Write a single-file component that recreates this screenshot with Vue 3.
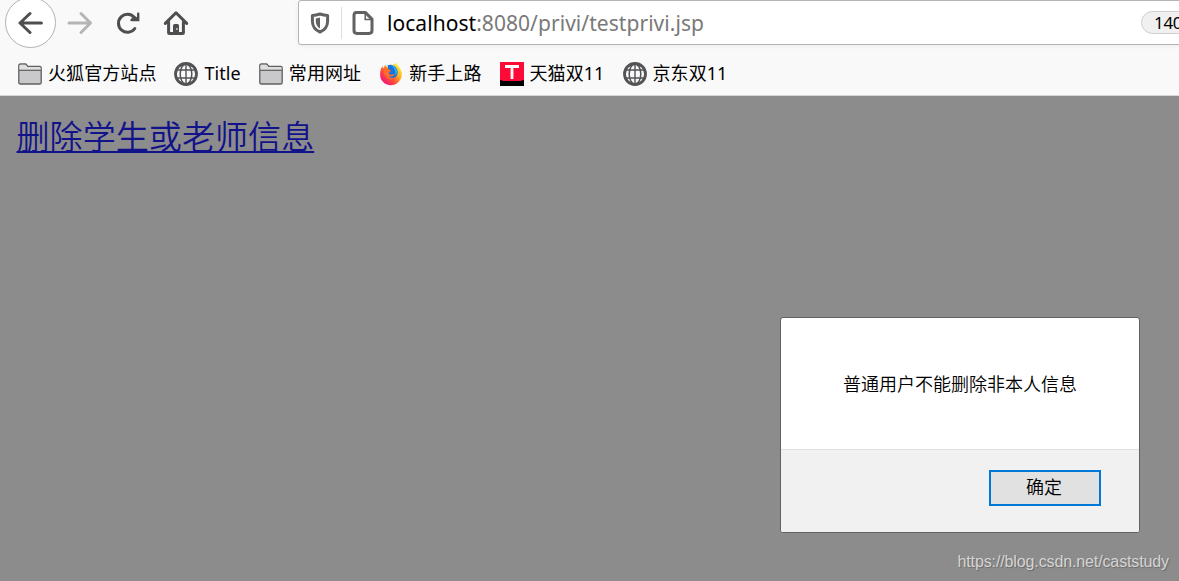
<script setup>
import { ref } from 'vue'

const bookmarks = [
  { icon: 'folder', title: '火狐官方站点' },
  { icon: 'globe', title: 'Title' },
  { icon: 'folder', title: '常用网址' },
  { icon: 'firefox', title: '新手上路' },
  { icon: 'tmall', title: '天猫双11' },
  { icon: 'globe', title: '京东双11' },
]

const dialogOpen = ref(true)
</script>

<template>
  <div class="browser">
    <header class="chrome">
      <div class="toolbar">
        <nav class="nav">
          <button class="nav__back" aria-label="Back">
            <svg width="26" height="24" viewBox="0 0 26 24">
              <path d="M23.4 12H3M12 2.5L2 12L12 21.5" />
            </svg>
          </button>
          <button class="nav__btn nav__btn--disabled" aria-label="Forward">
            <svg width="26" height="24" viewBox="0 0 26 24">
              <path d="M2 12H23M14 2.5L23.5 12L14 21.5" />
            </svg>
          </button>
          <button class="nav__btn nav__btn--reload" aria-label="Reload">
            <svg width="26" height="24" viewBox="0 0 26 24">
              <path d="M19.8 17.5A9 9 0 1 1 19.4 6.5L22 8.5" />
              <path class="solid" d="M23.2 1.5c.9 0 1.2.4 1.2 1.3v7.4h-7.8c-1.3 0-1.7-1.1-.9-2l2.2-2.2 2.4 1.6 1.7-1.6V2.8c0-.9.4-1.3 1.2-1.3z" />
            </svg>
          </button>
          <button class="nav__btn nav__btn--home" aria-label="Home">
            <svg width="26" height="26" viewBox="0 0 26 26">
              <path d="M2.3 13.4L13 2.8L23.7 13.4M5.6 12V22.5Q5.6 23.5 6.6 23.5H19.4Q20.4 23.5 20.4 22.5V12" />
              <path class="solid" d="M10 24V15.5q0-1.5 1.5-1.5h3q1.5 0 1.5 1.5V24z" />
              <rect class="knob" x="13.2" y="18" width="1.5" height="2" />
            </svg>
          </button>
        </nav>

        <div class="urlbar">
          <svg class="urlbar__shield" width="20" height="22" viewBox="0 0 20 22">
            <path class="line" d="M10 2C7.4 2.9 5 3.4 2.4 3.6V9.5C2.6 14.8 5.4 18.2 10 20C14.6 18.2 17.4 14.8 17.6 9.5V3.6C15 3.4 12.6 2.9 10 2Z" />
            <path class="fill" d="M10 5.5V16.5C7.2 15 6 12.6 5.8 9.5V6.5C7.3 6.3 8.6 6 10 5.5Z" />
          </svg>
          <span class="urlbar__divider"></span>
          <svg class="urlbar__page" width="22" height="24" viewBox="0 0 22 24">
            <path class="line" d="M4.5 1.6H13.5L20 8.1V19.5Q20 22.4 17.1 22.4H4.9Q2 22.4 2 19.5V4.5Q2 1.6 4.5 1.6Z" />
            <path class="thin" d="M13.2 2V8.5H19.7" />
          </svg>
          <span class="urlbar__text"><b>localhost</b>:8080/privi/testprivi.jsp</span>
          <span class="urlbar__zoom">140%</span>
        </div>
      </div>

      <div class="bookmarks">
        <a v-for="(item, i) in bookmarks" :key="i" class="bookmark">
          <svg v-if="item.icon === 'folder'" width="24" height="24" viewBox="0 0 24 24">
            <path
              d="M.8 20.4V3.6Q.8 2 2.4 2H7.2Q8.2 2 8.7 2.8L9.8 4.4H21.6Q23.2 4.4 23.2 6V20.4Q23.2 22 21.6 22H2.4Q.8 22 .8 20.4Z"
              fill="#c9c9cb" stroke="#606060" stroke-width="1.3"
            />
            <path d="M1.5 8V3.8Q1.5 2.7 2.6 2.7H7.3L9.2 5.1H21.4Q22.5 5.1 22.5 6V8Z" fill="#dedede" />
            <path d="M1 8.3H23" stroke="#606060" stroke-width="1.2" />
          </svg>
          <svg v-else-if="item.icon === 'globe'" width="24" height="24" viewBox="0 0 24 24">
            <g fill="none" stroke="#535355">
              <circle cx="12" cy="12" r="10.5" stroke-width="2.8" />
              <ellipse cx="12" cy="12" rx="5.8" ry="10" stroke-width="1.5" />
              <path d="M12 2V22M3 8H21M3 16H21" stroke-width="1.4" />
            </g>
          </svg>
          <svg v-else-if="item.icon === 'firefox'" width="24" height="24" viewBox="0 0 24 24">
            <defs>
              <linearGradient id="fox" x1=".9" y1=".1" x2=".15" y2=".9">
                <stop offset="0" stop-color="#fff23a" />
                <stop offset=".35" stop-color="#ffb01f" />
                <stop offset=".65" stop-color="#ff4f35" />
                <stop offset="1" stop-color="#f5107c" />
              </linearGradient>
            </defs>
            <path
              d="M3.3 4.2C3.5 5.2 4 5.8 4.5 6.2C5 4.8 5.6 3.8 6.8 2.7C7 4 7.8 5 9 5.5L17 1C17.4 2.6 18.6 3.3 19.8 4.8C22.1 7.3 23 10 22.8 13C22.3 19 17.5 23.2 12 23.2C5.8 23.2 1.1 18.5 1.1 12.5C1.1 9.3 1.8 6.5 3.3 4.2Z"
              fill="url(#fox)"
            />
            <path d="M8.5 3.2C12.5 1.5 17 4.1 18.4 8.2C19.4 12.4 17.2 16.8 12.5 16.8C9 16.8 6.5 14.4 6.3 11.5L9.5 8.5Z" fill="#1674df" />
            <path d="M12 3C14.5 3.4 17 5.3 17.8 8.2C18.2 10.4 17.5 12.5 16.4 14C16.8 9 15.4 5.5 12 3Z" fill="#29b3f5" />
            <path d="M4.5 6.2C6 5.7 7.8 5.8 9 6.4C9.8 7.7 11 8 12.2 8.3C12.3 9.6 10.2 9.8 10 10.6C9.7 12 10.8 13.3 13.2 12.4C14.5 12 15.4 12.2 15.8 12.8C14 14.1 12.6 15.2 9.6 14.2C11 16.2 14.5 16.5 17.3 14.3C14.5 19.7 4.3 18.7 4.5 6.2Z" fill="#ff6b2c" />
          </svg>
          <svg v-else width="24" height="24" viewBox="0 0 24 24">
            <rect width="24" height="24" fill="#ff0a37" />
            <path d="M0 18Q2.2 18 3 19H21Q21.8 18 24 18V24H0Z" fill="#000" />
            <path d="M5 4.5H19M12 4.5V17" fill="none" stroke="#fff" stroke-width="2.8" />
          </svg>
          <span class="bookmark__title">{{ item.title }}</span>
        </a>
      </div>
    </header>

    <main class="page">
      <a class="page__link">删除学生或老师信息</a>
    </main>

    <div v-if="dialogOpen" class="dialog" role="alertdialog">
      <p class="dialog__message">普通用户不能删除非本人信息</p>
      <div class="dialog__footer">
        <button class="dialog__ok" @click="dialogOpen = false">确定</button>
      </div>
    </div>

    <span class="watermark">https://blog.csdn.net/caststudy</span>
  </div>
</template>

<style>
body {
  margin: 0;
  overflow: hidden;
}
</style>

<style scoped>
.browser {
  position: relative;
  width: 1179px;
  height: 581px;
  display: flex;
  flex-direction: column;
  overflow: hidden;
  background: #8c8c8c;
  font-family: "Noto Sans", "Noto Sans CJK SC", sans-serif;
  color: #000;
}

button {
  padding: 0;
  border: 0;
  background: none;
  font-family: inherit;
}

svg {
  display: block;
  flex: none;
}

.chrome {
  box-sizing: border-box;
  height: 96px;
  flex: none;
  background: #f9f9fa;
  border-bottom: 1px solid #d6d6d6;
}

.toolbar {
  display: flex;
  height: 52px;
}

.nav {
  display: flex;
  flex: none;
  align-items: flex-start;
  width: 293px;
  padding-left: 5px;
}

.nav svg {
  fill: none;
  stroke: #4e4e50;
  stroke-width: 3;
  stroke-linecap: round;
  stroke-linejoin: round;
}

.nav .solid {
  fill: #4e4e50;
  stroke: none;
}

.nav .knob {
  fill: #c8c8c8;
  stroke: none;
}

.nav__back {
  box-sizing: border-box;
  display: flex;
  align-items: center;
  justify-content: center;
  width: 51px;
  height: 51px;
  margin-top: -3px;
  border: 1px solid #b2b2b3;
  border-radius: 50%;
  background: #fff;
}

.nav__btn {
  margin: 11px 0 0 11px;
}

.nav .nav__btn--disabled svg {
  stroke: #b5b5b6;
}

.nav__btn--reload {
  margin-left: 22px;
}

.nav__btn--home {
  margin: 10px 0 0 22px;
}

.urlbar {
  box-sizing: border-box;
  display: flex;
  align-items: center;
  flex: none;
  width: 912px;
  height: 45px;
  padding-left: 11px;
  border: 1px solid #b4b4b5;
  border-radius: 3px;
  background: #fff;
  box-shadow: 0 1px 5px rgb(0 0 0 / 0.06);
}

.urlbar .line {
  fill: none;
  stroke: #626264;
  stroke-width: 3;
  stroke-linejoin: round;
}

.urlbar .fill {
  fill: #626264;
}

.urlbar .thin {
  fill: none;
  stroke: #626264;
  stroke-width: 1.5;
}

.urlbar__divider {
  width: 1px;
  height: 32px;
  margin: 0 10px 0 11px;
  background: #dedede;
}

.urlbar__text {
  flex: none;
  width: 754px;
  margin-left: 13px;
  font-size: 21px;
  line-height: 30px;
  letter-spacing: 0.05px;
  white-space: nowrap;
  color: #797979;
}

.urlbar__text b {
  font-weight: 400;
  color: #000;
}

.urlbar__zoom {
  box-sizing: border-box;
  flex: none;
  width: 66px;
  height: 23px;
  padding-left: 12px;
  border: 1px solid #cfcfcf;
  border-radius: 12px;
  background: #f0f0f0;
  font-size: 17px;
  line-height: 21px;
  letter-spacing: -0.3px;
}

.bookmarks {
  display: flex;
  align-items: center;
  gap: 18px;
  height: 43px;
  padding-left: 18px;
}

.bookmark {
  display: flex;
  align-items: center;
  gap: 6px;
}

.bookmark__title {
  margin-top: -1px;
  font-size: 18px;
  line-height: 24px;
  letter-spacing: 0.08px;
  white-space: nowrap;
}

.page {
  padding: 15px 16px;
}

.page__link {
  display: block;
  width: max-content;
  margin-left: 0.5px;
  font-family: "Noto Sans CJK SC", sans-serif;
  font-size: 33.1px;
  font-weight: 350;
  line-height: 48px;
  color: #12128a;
  text-decoration: underline;
  text-decoration-thickness: 2px;
  text-underline-offset: 2px;
}

.dialog {
  position: absolute;
  left: 780px;
  top: 317px;
  box-sizing: border-box;
  display: flex;
  flex-direction: column;
  width: 360px;
  height: 216px;
  overflow: hidden;
  border: 1px solid #626262;
  border-radius: 3px;
  background: #fff;
}

.dialog__message {
  height: 131px;
  margin: 0;
  padding-left: 62px;
  font-size: 18px;
  font-weight: 350;
  line-height: 132px;
}

.dialog__footer {
  box-sizing: border-box;
  display: flex;
  flex: none;
  justify-content: flex-end;
  height: 83px;
  padding: 20px 38px 0 0;
  border-top: 1px solid #dfdfdf;
  background: #f1f1f1;
}

.dialog__ok {
  box-sizing: border-box;
  width: 112px;
  height: 36px;
  padding: 0 2px 2px 0;
  border: 2px solid #0078d7;
  background: #e1e1e1;
  font-size: 18px;
  font-weight: 350;
  line-height: 30px;
  color: #000;
}

.watermark {
  position: absolute;
  right: 10px;
  bottom: 9px;
  font-family: "Liberation Sans", sans-serif;
  font-size: 16px;
  line-height: 20px;
  letter-spacing: -0.12px;
  color: #d4d4d4;
  text-shadow: 1px 1px 1px rgb(0 0 0 / 0.25);
}
</style>
